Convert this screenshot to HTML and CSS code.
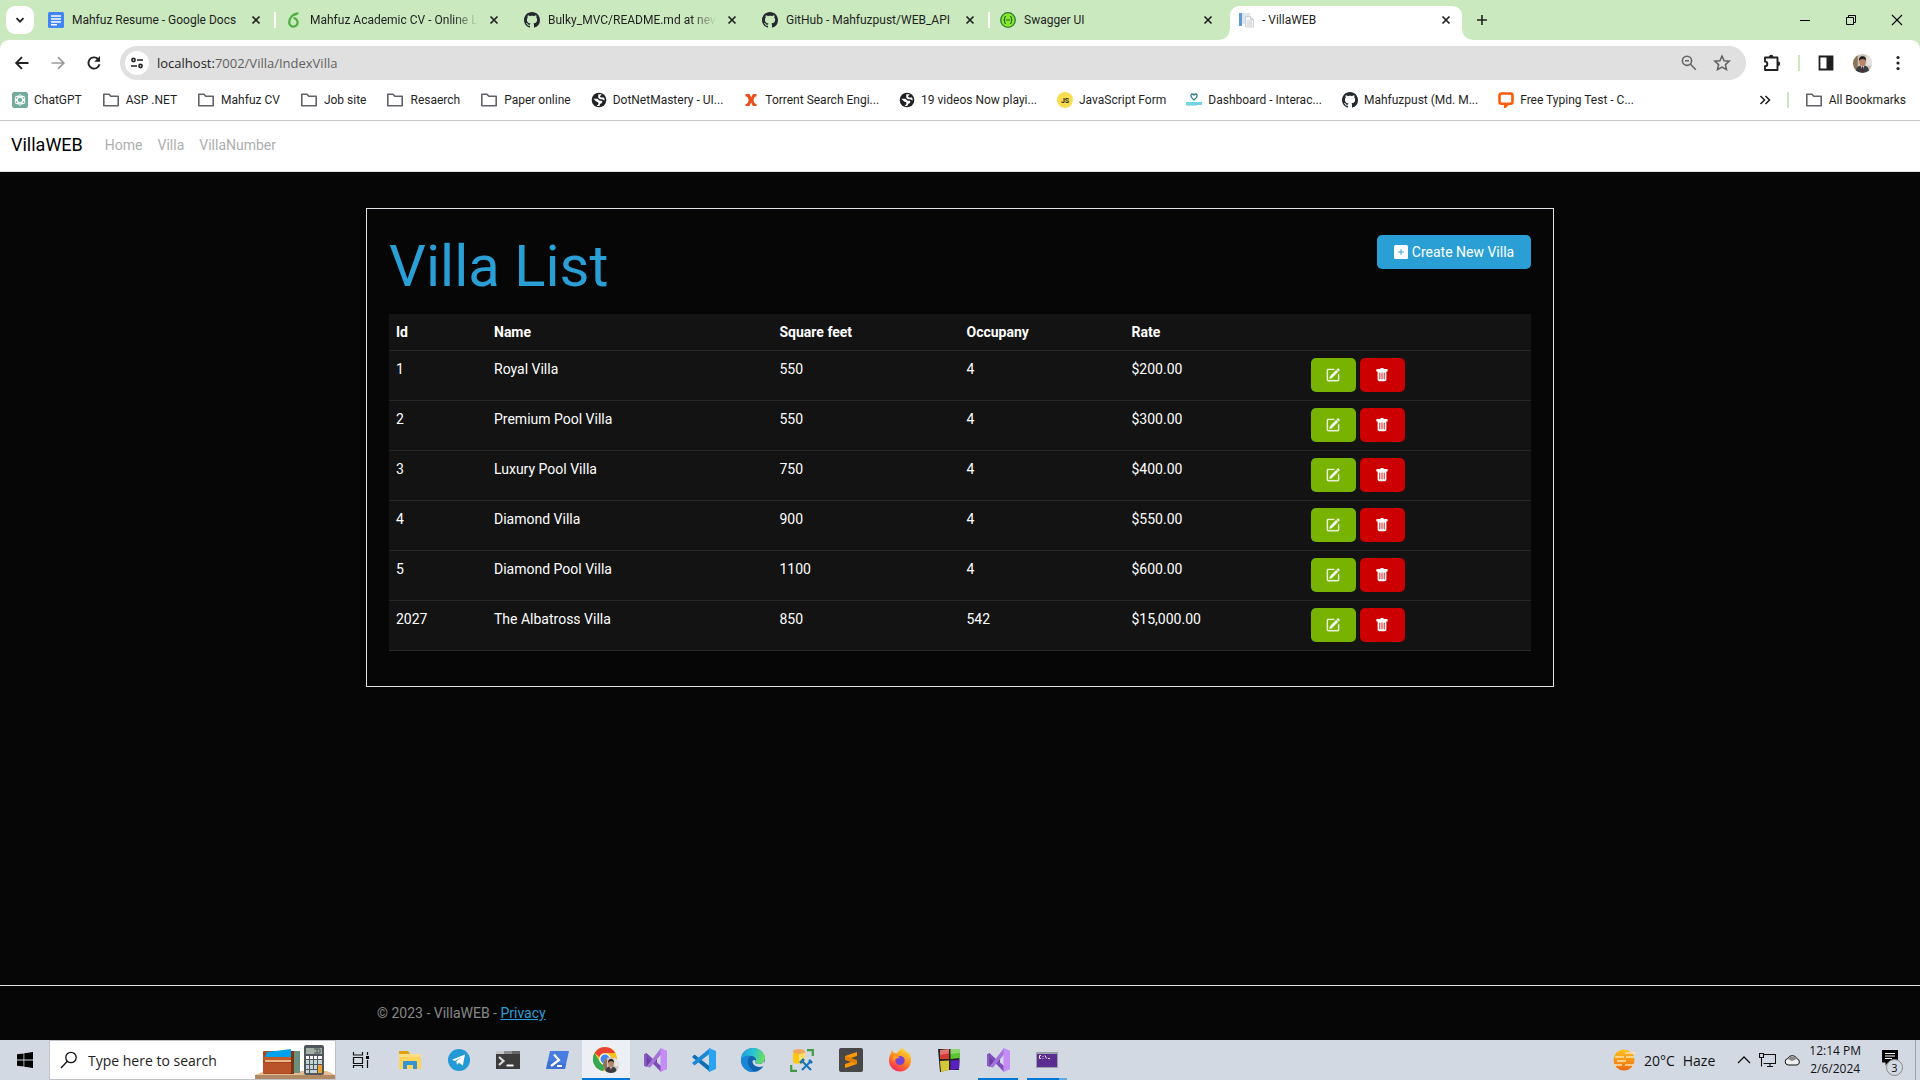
FILE: index.html
```html
<!DOCTYPE html>
<html lang="en">
<head>
<meta charset="utf-8">
<meta name="viewport" content="width=device-width, initial-scale=1">
<title>- VillaWEB</title>
<link rel="stylesheet" href="styles.css">
</head>
<body>
<svg class="defs" aria-hidden="true">
  <symbol id="i-close" viewBox="0 0 10 10"><path d="M1.5 1.5l7 7M8.5 1.5l-7 7" fill="none" stroke="#222" stroke-width="1.7"/></symbol>
  <symbol id="i-folder" viewBox="0 0 18 16"><path d="M1.8 2.2h5.2l1.8 2.1h7.4v9.5H1.8z" fill="none" stroke="#5f6368" stroke-width="1.6" stroke-linejoin="round"/></symbol>
  <symbol id="i-github" viewBox="0 0 16 16"><path fill="#24292f" d="M8 0C3.58 0 0 3.58 0 8c0 3.54 2.29 6.53 5.47 7.59.4.07.55-.17.55-.38 0-.19-.01-.82-.01-1.49-2.01.37-2.53-.49-2.69-.94-.09-.23-.48-.94-.82-1.13-.28-.15-.68-.52-.01-.53.63-.01 1.08.58 1.23.82.72 1.21 1.87.87 2.33.66.07-.52.28-.87.51-1.07-1.78-.2-3.64-.89-3.64-3.95 0-.87.31-1.59.82-2.15-.08-.2-.36-1.02.08-2.12 0 0 .67-.21 2.2.82.64-.18 1.32-.27 2-.27.68 0 1.36.09 2 .27 1.53-1.04 2.2-.82 2.2-.82.44 1.1.16 1.92.08 2.12.51.56.82 1.27.82 2.15 0 3.07-1.87 3.75-3.65 3.95.29.25.54.73.54 1.48 0 1.07-.01 1.93-.01 2.2 0 .21.15.46.55.38A8.012 8.012 0 0 0 16 8c0-4.42-3.58-8-8-8z"/></symbol>
  <symbol id="i-globe" viewBox="0 0 16 16"><circle cx="8" cy="8" r="7.3" fill="#202124"/><path d="M2.400 6.800h3.800c1.300 0 1.300 1.900 2.600 1.900h2.400v1.400c0 1.600-2 1.300-2.400 2.600l-.3 1.300c-1 .2-2.200-.1-3-.5 1.700-.3 2-1.300 1.900-2.400-.1-1.300-1.700-1-2.500-1.800zM7.300 2.300h3.400c-.2 1-1.200 1.200-1.600 1.800-.3.700.5 1.300 1.400 1.300H13c.5 1 .8 2 .6 3-1.200-.7-2.300-1.200-3.700-1.200-1.600 0-2.700-.9-2.700-2.500z" fill="#fff"/></symbol>
  <symbol id="i-edit" viewBox="0 0 16 16"><path fill="currentColor" stroke="currentColor" stroke-width=".4" d="M15.502 1.940a.5.5 0 0 1 0 .706L14.459 3.690l-2-2L13.502.646a.5.5 0 0 1 .707 0l1.293 1.293zm-1.750 2.456-2-2L4.939 9.210a.5.5 0 0 0-.121.196l-.805 2.414a.25.25 0 0 0 .316.316l2.414-.805a.5.5 0 0 0 .196-.12l6.813-6.814z"/><path fill="currentColor" stroke="currentColor" stroke-width=".4" d="M1 13.500A1.500 1.500 0 0 0 2.500 15h11a1.500 1.500 0 0 0 1.500-1.500v-6a.5.5 0 0 0-1 0v6a.5.5 0 0 1-.5.5h-11a.5.5 0 0 1-.5-.5v-11a.5.5 0 0 1 .5-.5H9a.5.5 0 0 0 0-1H2.500A1.500 1.500 0 0 0 1 2.500v11z"/></symbol>
  <symbol id="i-trash" viewBox="0 0 16 16"><path fill="currentColor" d="M2.500 1a1 1 0 0 0-1 1v1a1 1 0 0 0 1 1H3v9a2 2 0 0 0 2 2h6a2 2 0 0 0 2-2V4h.5a1 1 0 0 0 1-1V2a1 1 0 0 0-1-1H10a1 1 0 0 0-1-1H7a1 1 0 0 0-1 1H2.500zm3 4a.5.5 0 0 1 .5.5v7a.5.5 0 0 1-1 0v-7a.5.5 0 0 1 .5-.5zM8 5a.5.5 0 0 1 .5.5v7a.5.5 0 0 1-1 0v-7A.5.5 0 0 1 8 5zm3 .5v7a.5.5 0 0 1-1 0v-7a.5.5 0 0 1 1 0z"/></symbol>
  <symbol id="i-avatar" viewBox="0 0 20 20"><clipPath id="av"><circle cx="10" cy="10" r="10"/></clipPath><g clip-path="url(#av)"><path fill="#c9c3ba" d="M0 0h20v20H0z"/><path fill="#8b7358" d="M0 0h5v20H0z"/><path fill="#e6e4e0" d="M14 0h6v12h-6z"/><path fill="#3a3d42" d="M3 20c0-6 2-8 7-8s7 2 7 8z"/><path fill="#eee" d="M8 12l2 5 2-5z"/><path fill="#5d2431" d="M9.400 13h1.200l.5 6h-2z"/><ellipse cx="10" cy="8.500" rx="3.300" ry="4.200" fill="#b98566"/><path fill="#241c1a" d="M6.300 8c-.4-4 1.200-5.600 3.800-5.600S14 4 13.700 8c-.6-2-1.500-2.700-3.600-2.700S6.900 6 6.300 8z"/></g></symbol>
  <symbol id="i-vs" viewBox="0 0 24 24"><path fill="#6b3fa0" d="M1 6.500l2.500-1.300L14 15.500V8L3.500 18.800 1 17.500z"/><path fill="#8a5cc4" d="M1 6.500L3.500 5v14L1 17.500z"/><path fill="#7d4dbb" d="M3.500 5.200L18 18v6L3.500 9z"/><path fill="#a274dc" d="M3.500 18.800L18 0v6.500L7 19.500z"/><path fill="#c58cf5" d="M17.500 0L24 2.800v18.400L17.500 24z"/></symbol>
</svg>

<header class="browser">
  <div class="tabstrip">
    <button class="tab-search" aria-label="Search tabs"><svg width="12" height="12" viewBox="0 0 12 12"><path d="M2.500 4.200L6 7.700l3.500-3.500" fill="none" stroke="#222" stroke-width="1.800"/></svg></button>
    <div class="tabs">
      <div class="tab divided"><svg class="fav" viewBox="0 0 16 16"><rect width="16" height="16" rx="1.500" fill="#4285f4"/><path d="M3 4h10M3 7h10M3 10h10M3 12.800h6" stroke="#fff" stroke-width="1.500"/></svg><span class="tab-title">Mahfuz Resume - Google Docs</span><button class="tab-close" aria-label="Close tab"><svg><use href="#i-close"/></svg></button></div>
      <div class="tab"><svg class="fav" viewBox="0 0 16 16"><path d="M11 1.500C7 1.800 3.200 6 3.200 10.200a4.200 4.200 0 1 0 4.300-4" fill="none" stroke="#4caf3f" stroke-width="2.200"/><path d="M5 4.500C7 2 10 0 13 .8c-1 2.500-4 3.200-6 2.800z" fill="#4caf3f"/></svg><span class="tab-title faded">Mahfuz Academic CV - Online L</span><button class="tab-close" aria-label="Close tab"><svg><use href="#i-close"/></svg></button></div>
      <div class="tab"><svg class="fav"><use href="#i-github"/></svg><span class="tab-title faded">Bulky_MVC/README.md at new</span><button class="tab-close" aria-label="Close tab"><svg><use href="#i-close"/></svg></button></div>
      <div class="tab divided"><svg class="fav"><use href="#i-github"/></svg><span class="tab-title">GitHub - Mahfuzpust/WEB_API</span><button class="tab-close" aria-label="Close tab"><svg><use href="#i-close"/></svg></button></div>
      <div class="tab"><svg class="fav" viewBox="0 0 16 16"><circle cx="8" cy="8" r="7.300" fill="#85ea2d" stroke="#2c7a3a" stroke-width="1.300"/><path d="M6 4.500c-1.500 0-1.300 1-1.300 2S4.500 8 3.500 8c1 0 1.200.5 1.200 1.500s-.2 2 1.300 2M10 4.500c1.500 0 1.300 1 1.300 2s.2 1.500 1.200 1.500c-1 0-1.200.5-1.200 1.500s.2 2-1.300 2M6 8h4" fill="none" stroke="#27632f" stroke-width="1.100"/></svg><span class="tab-title">Swagger UI</span><button class="tab-close" aria-label="Close tab"><svg><use href="#i-close"/></svg></button></div>
      <div class="tab active"><svg class="fav" viewBox="0 0 16 16"><path fill="#5b9bd5" d="M1 1h3v13H1z"/><path fill="#dfe6ee" d="M4 1h8v11H4z"/><path d="M7.500 4.500h5l3 3V15h-8z" fill="#f4f4f4" stroke="#c3c8cf" stroke-width=".8"/><path d="M9 9h5M9 11h5M9 13h5M12.500 4.500v3h3" stroke="#c3c8cf" fill="none" stroke-width=".8"/></svg><span class="tab-title">- VillaWEB</span><button class="tab-close" aria-label="Close tab"><svg><use href="#i-close"/></svg></button></div>
    </div>
    <button class="new-tab" aria-label="New tab"><svg width="12" height="12" viewBox="0 0 12 12"><path d="M6 1v10M1 6h10" stroke="#222" stroke-width="1.600"/></svg></button>
    <div class="window-buttons">
      <button aria-label="Minimize"><svg width="12" height="12" viewBox="0 0 12 12"><path d="M1 6.500h10" stroke="#000"/></svg></button>
      <button aria-label="Restore"><svg width="12" height="12" viewBox="0 0 12 12"><path d="M1.500 3.500h7v7h-7zM3.500 3.500v-2h7v7h-2" fill="none" stroke="#000"/></svg></button>
      <button aria-label="Close"><svg width="12" height="12" viewBox="0 0 12 12"><path d="M1 1l10 10M11 1L1 11" stroke="#000" stroke-width="1.100"/></svg></button>
    </div>
  </div>

  <div class="toolbar">
    <button class="nav-button" aria-label="Back"><svg width="16" height="16" viewBox="0 0 16 16"><path d="M14.500 8H2.500M8 2.200L2.200 8 8 13.800" fill="none" stroke="#222" stroke-width="1.900"/></svg></button>
    <button class="nav-button" aria-label="Forward"><svg width="16" height="16" viewBox="0 0 16 16"><path d="M1.500 8h12M8 2.200L13.800 8 8 13.800" fill="none" stroke="#9a9a9a" stroke-width="1.700"/></svg></button>
    <button class="nav-button" aria-label="Reload"><svg width="16" height="16" viewBox="0 0 16 16"><path d="M13.500 9.300A5.600 5.600 0 1 1 12 4" fill="none" stroke="#222" stroke-width="1.900"/><path d="M14 1v5.800H8.200z" fill="#222"/></svg></button>
    <div class="address">
      <button class="site-info" aria-label="Site information"><svg width="14" height="14" viewBox="0 0 14 14"><g fill="none" stroke="#222" stroke-width="1.600"><circle cx="3.500" cy="4" r="1.600"/><path d="M7 4h6M1 10h6"/><circle cx="10.500" cy="10" r="1.600"/></g></svg></button>
      <p class="url"><span>localhost:</span>7002/Villa/IndexVilla</p>
      <button aria-label="Zoom"><svg width="16" height="16" viewBox="0 0 16 16"><g fill="none" stroke="#666" stroke-width="1.600"><circle cx="6" cy="5.800" r="4.600"/><path d="M9.500 9.300l5.300 5.500M4 5.800h4"/></g></svg></button>
      <button aria-label="Bookmark this tab"><svg width="18" height="18" viewBox="0 0 18 18"><path d="M9 2l2.100 4.700 5.100.5-3.800 3.400 1.100 5L9 13l-4.500 2.600 1.100-5L1.800 7.200l5.100-.5z" fill="none" stroke="#5f5f5f" stroke-width="1.500"/></svg></button>
    </div>
    <button class="tool" aria-label="Extensions"><svg width="18" height="18" viewBox="0 0 18 18"><path d="M2 3.500h12.500v12.500H2v-3.800a2.200 2.200 0 0 0 0-4.600z" fill="none" stroke="#222" stroke-width="1.900" stroke-linejoin="round"/><path fill="#222" d="M6 3a2.200 2.200 0 0 1 4.400 0zM15 7.600a2.200 2.200 0 0 1 0 4.400z"/></svg></button>
    <span class="green-rule"></span>
    <button class="tool" aria-label="Side panel"><svg width="16" height="16" viewBox="0 0 16 16"><path d="M1.500 1.500h13v13h-13z" fill="none" stroke="#1f1f1f" stroke-width="1.800"/><path fill="#1f1f1f" d="M8.500 1.500h6v13h-6z"/></svg></button>
    <button class="tool" aria-label="Profile"><svg width="19" height="19"><use href="#i-avatar"/></svg></button>
    <button class="tool" aria-label="Menu"><svg width="4" height="16" viewBox="0 0 4 16"><g fill="#222"><circle cx="2" cy="2.500" r="1.600"/><circle cx="2" cy="8" r="1.600"/><circle cx="2" cy="13.500" r="1.600"/></g></svg></button>
  </div>

  <nav class="bookmarks" aria-label="Bookmarks">
    <a href="#"><svg class="fav" viewBox="0 0 16 16"><rect width="16" height="16" rx="2.500" fill="#74aa9c"/><g fill="none" stroke="#fff" stroke-width=".9"><ellipse cx="8" cy="8" rx="2.600" ry="5.300"/><ellipse cx="8" cy="8" rx="2.600" ry="5.300" transform="rotate(60 8 8)"/><ellipse cx="8" cy="8" rx="2.600" ry="5.300" transform="rotate(120 8 8)"/></g></svg>ChatGPT</a>
    <a href="#"><svg class="folder"><use href="#i-folder"/></svg>ASP .NET</a>
    <a href="#"><svg class="folder"><use href="#i-folder"/></svg>Mahfuz CV</a>
    <a href="#"><svg class="folder"><use href="#i-folder"/></svg>Job site</a>
    <a href="#"><svg class="folder"><use href="#i-folder"/></svg>Resaerch</a>
    <a href="#"><svg class="folder"><use href="#i-folder"/></svg>Paper online</a>
    <a href="#"><svg class="fav"><use href="#i-globe"/></svg>DotNetMastery - UI...</a>
    <a href="#"><svg class="fav" viewBox="0 0 16 16"><path fill="#e8501e" d="M2.500 2h4l1.700 3.200L10 2h3.500v2.300c-1.800.2-2.800 1.700-2.900 3.700 0 2 1 4 3 4.300V14H9.800l-1.700-3.400L6.500 14h-4v-1.800C4.500 11.800 5.600 10 5.500 8S4.400 4.500 2.500 4.300z"/></svg>Torrent Search Engi...</a>
    <a href="#"><svg class="fav"><use href="#i-globe"/></svg>19 videos Now playi...</a>
    <a href="#"><svg class="fav" viewBox="0 0 16 16"><circle cx="8" cy="8" r="8" fill="#f9dc4f"/><text x="8" y="11" text-anchor="middle" class="js-mark">JS</text></svg>JavaScript Form</a>
    <a href="#"><svg class="fav" viewBox="0 0 16 16"><path d="M8 8C5 5.500 4.500 4.500 5 3c.7-1.500 2.300-1.200 3 0 .7-1.200 2.300-1.500 3 0 .5 1.500 0 2.500-3 5z" fill="none" stroke="#2a7f8c" stroke-width="1.300"/><path fill="#6fd6e6" d="M0 10h16v3H0z"/><path fill="#b5e4ea" d="M0 13h11v1H0z"/></svg>Dashboard - Interac...</a>
    <a href="#"><svg class="fav"><use href="#i-github"/></svg>Mahfuzpust (Md. M...</a>
    <a href="#"><svg class="fav" viewBox="0 0 16 16"><path d="M3.500 1.500h9a2 2 0 0 1 2 2v6.300a2 2 0 0 1-2 2H10L7.200 14.600v-2.800H3.500a2 2 0 0 1-2-2V3.500a2 2 0 0 1 2-2z" fill="none" stroke="#ff5a0a" stroke-width="2.600"/></svg>Free Typing Test - C...</a>
    <button class="more" aria-label="More bookmarks"><svg width="12" height="10" viewBox="0 0 12 10"><path d="M1.500 1l4 4-4 4M6.500 1l4 4-4 4" fill="none" stroke="#222" stroke-width="1.600"/></svg></button>
    <span class="green-rule"></span>
    <a href="#"><svg class="folder"><use href="#i-folder"/></svg>All Bookmarks</a>
  </nav>
</header>

<div class="site">
  <nav class="navbar" aria-label="Site">
    <a class="brand" href="#">VillaWEB</a>
    <a href="#">Home</a>
    <a href="#">Villa</a>
    <a href="#">VillaNumber</a>
  </nav>

  <main class="container card">
    <div class="card-head">
      <h1>Villa List</h1>
      <button class="btn primary"><svg width="14" height="14" viewBox="0 0 14 14"><rect width="14" height="14" rx="1.500" fill="#fff"/><path d="M7 4v6M4 7h6" stroke="#2a9fd6" stroke-width=".9"/></svg>Create New Villa</button>
    </div>
    <table>
      <colgroup><col class="c-id"><col class="c-name"><col class="c-area"><col class="c-occ"><col class="c-rate"><col></colgroup>
      <thead><tr><th>Id</th><th>Name</th><th>Square feet</th><th>Occupany</th><th>Rate</th><th></th></tr></thead>
      <tbody>
        <tr><td>1</td><td>Royal Villa</td><td>550</td><td>4</td><td>$200.00</td><td><div class="actions"><button class="btn success" aria-label="Edit"><svg><use href="#i-edit"/></svg></button><button class="btn danger" aria-label="Delete"><svg><use href="#i-trash"/></svg></button></div></td></tr>
        <tr><td>2</td><td>Premium Pool Villa</td><td>550</td><td>4</td><td>$300.00</td><td><div class="actions"><button class="btn success" aria-label="Edit"><svg><use href="#i-edit"/></svg></button><button class="btn danger" aria-label="Delete"><svg><use href="#i-trash"/></svg></button></div></td></tr>
        <tr><td>3</td><td>Luxury Pool Villa</td><td>750</td><td>4</td><td>$400.00</td><td><div class="actions"><button class="btn success" aria-label="Edit"><svg><use href="#i-edit"/></svg></button><button class="btn danger" aria-label="Delete"><svg><use href="#i-trash"/></svg></button></div></td></tr>
        <tr><td>4</td><td>Diamond Villa</td><td>900</td><td>4</td><td>$550.00</td><td><div class="actions"><button class="btn success" aria-label="Edit"><svg><use href="#i-edit"/></svg></button><button class="btn danger" aria-label="Delete"><svg><use href="#i-trash"/></svg></button></div></td></tr>
        <tr><td>5</td><td>Diamond Pool Villa</td><td>1100</td><td>4</td><td>$600.00</td><td><div class="actions"><button class="btn success" aria-label="Edit"><svg><use href="#i-edit"/></svg></button><button class="btn danger" aria-label="Delete"><svg><use href="#i-trash"/></svg></button></div></td></tr>
        <tr><td>2027</td><td>The Albatross Villa</td><td>850</td><td>542</td><td>$15,000.00</td><td><div class="actions"><button class="btn success" aria-label="Edit"><svg><use href="#i-edit"/></svg></button><button class="btn danger" aria-label="Delete"><svg><use href="#i-trash"/></svg></button></div></td></tr>
      </tbody>
    </table>
  </main>

  <footer class="site-footer"><p class="container">© 2023 - VillaWEB - <a href="#">Privacy</a></p></footer>
</div>

<div class="taskbar">
  <button class="start" aria-label="Start"><svg width="16" height="16" viewBox="0 0 16 16"><path d="M0 2.300L6.500 1.400v6.200H0zM7.300 1.200L16 0v7.600H7.300zM0 8.400h6.500v6.200L0 13.700zM7.300 8.400H16V16l-8.700-1.200z"/></svg></button>
  <div class="search">
    <svg width="18" height="18" viewBox="0 0 18 18"><g fill="none" stroke="#111" stroke-width="1.300"><circle cx="11" cy="6.500" r="5.200"/><path d="M7.300 10.300L1 17"/></g></svg>
    <input type="text" aria-label="Search" placeholder="Type here to search">
    <svg class="search-art" width="80" height="38" viewBox="0 0 80 38"><path fill="#e8bd94" d="M10 30h62l8 4H0z"/><path fill="#b08a64" d="M0 34h80v4H0z"/><rect x="38" y="10" width="7" height="22" fill="#6b8f7a"/><rect x="8" y="10" width="31" height="23" rx="1" fill="#a9491f"/><path fill="#7d3415" d="M35 10h4v23h-4z"/><path fill="#00a2ed" d="M10 16l2-5 24-3v8z"/><path fill="#c45a2a" d="M8 16h28v3H8z"/><path fill="#e8b888" d="M10 19h26v2H10z"/><path fill="#b9542a" d="M8 22h28v10H8z"/><rect x="49" y="4" width="20" height="30" rx="2" fill="#51565c"/><rect x="51" y="7" width="16" height="6" fill="#a3b0a5"/><path d="M59 8h6v4h-6M62 8v4" fill="none" stroke="#51565c"/><g fill="#fff"><path d="M51 15h3v3h-3zM55 15h3v3h-3zM59 15h3v3h-3zM63 15h4v3h-4z"/></g><g fill="#c3d4d8"><path d="M51 19h3v4h-3zM55 19h3v4h-3zM59 19h3v4h-3zM63 19h4v4h-4zM51 24h3v4h-3zM55 24h3v4h-3zM59 24h3v4h-3zM51 29h3v3h-3zM55 29h7v3h-7z"/></g><path fill="#f0a02c" d="M63 24h4v8h-4z"/></svg>
  </div>
  <div class="apps">
    <button aria-label="Task view"><svg width="18" height="16" viewBox="0 0 18 16"><path d="M1.500 0v3h9V0M1.500 5.500h9v6h-9zM1.500 16v-2.500h9V16M15.500 0v3M15.500 8v8" fill="none" stroke="#111" stroke-width="1.200"/><path d="M14 4h3v3h-3z"/></svg></button>
    <button aria-label="File Explorer"><svg width="24" height="24" viewBox="0 0 24 24"><path fill="#dfa00f" d="M1 3h9l2 3v4H1z"/><path fill="#ffd35c" d="M1 6h22v15H1z"/><path fill="#ffdf85" d="M1 6h22v3H1z"/><path fill="#3893d1" d="M5 21v-7q0-1 1-1h12q1 0 1 1v7h-4v-4H9v4z"/></svg></button>
    <button aria-label="Telegram"><svg width="24" height="24" viewBox="0 0 24 24"><circle cx="12" cy="12" r="11" fill="#239ad6"/><path fill="#fff" d="M5 11.800L18 6.600l-2.200 11-3.800-2.800-2 2-.7-3.600L15 9l-7.200 4z"/></svg></button>
    <button aria-label="Terminal"><svg width="24" height="24" viewBox="0 0 24 24"><path fill="#3b3b3b" d="M0 3h24v18H0z"/><path fill="#c5c5c5" d="M0 3h8v3H0z"/><path fill="#8d8d8d" d="M8 3h8v3H8z"/><path fill="#666" d="M16 3h8v3h-8z"/><path d="M3 9l4.500 4L3 17" fill="none" stroke="#ddd" stroke-width="2.200"/><path d="M10.500 17.500h7" stroke="#fff" stroke-width="2"/></svg></button>
    <button aria-label="PowerShell"><svg width="24" height="24" viewBox="0 0 24 24"><path fill="#477de0" d="M5 3h19l-4 18H1z"/><path fill="#2f62c7" d="M3 13l-2 8h19l1-5z" opacity=".45"/><path d="M9 6.500l5 5.500-8 6" fill="none" stroke="#fff" stroke-width="2.200"/><path d="M12 18h5" stroke="#fff" stroke-width="2"/></svg></button>
    <button class="current" aria-label="Chrome"><svg width="28" height="28" viewBox="0 0 28 28"><circle cx="13" cy="13" r="12" fill="#fbc116"/><path fill="#ea4335" d="M13 1a12 12 0 0 1 10.400 6H13a6 6 0 0 0-5.600 4L2.600 7A12 12 0 0 1 13 1z"/><path fill="#34a853" d="M2.600 7l5.200 9A6 6 0 0 0 14 19l-3 6A12 12 0 0 1 2.600 7z"/><circle cx="13" cy="13" r="5.800" fill="#fff"/><circle cx="13" cy="13" r="4.500" fill="#4285f4"/><svg x="11" y="11" width="16" height="16"><use href="#i-avatar"/></svg></svg></button>
    <button aria-label="Visual Studio"><svg width="24" height="24"><use href="#i-vs"/></svg></button>
    <button aria-label="Visual Studio Code"><svg width="24" height="24" viewBox="0 0 24 24"><path fill="#0f6fb5" d="M0 9l2.500-2.500L18 18.500V24z"/><path fill="#1a8ad6" d="M0 15l2.500 2.500L18 5.500V0z"/><path fill="#2aa4f2" d="M17 0l7 3v18l-7 3z"/></svg></button>
    <button aria-label="Edge"><svg width="24" height="24" viewBox="0 0 24 24"><defs><linearGradient id="eg" x1="0" y1=".3" x2="1" y2=".5"><stop offset="0" stop-color="#1f9de0"/><stop offset=".5" stop-color="#2bc3d2"/><stop offset="1" stop-color="#6fe05a"/></linearGradient></defs><circle cx="12" cy="12" r="12" fill="#0f63b0"/><path fill="url(#eg)" d="M0 12C0 4 6 0 12 0c7 0 12 5 12 10 0 4-3 6-6 6-3.500 0-4.500-1-3.500-2.500C16 11 14 8 10 8 5 8 1 10 0 12z"/><path fill="#1b86d6" d="M0 12c1-4 6-5 9.500-4C5 11 6 20 14 23.800 6 25 0 19 0 12z"/><path fill="#d3d9e3" d="M14.500 13.500c-1 1.500 0 2.500 3.500 2.500 2 0 4-.8 5.500-3l.5 4-2.500 1.500C16 20 11.500 17.500 11.500 13c1.500-2 3.500-1 3 .5z"/></svg></button>
    <button aria-label="SQL Server Management"><svg width="24" height="24" viewBox="0 0 24 24"><path fill="#ffc815" d="M3 3v11c0 2.500 12 2.500 12 0V3z"/><path fill="#ffe066" d="M9 5h6v9c0 1.500-3 2-6 2z"/><ellipse cx="9" cy="3.500" rx="6" ry="2.500" fill="#f2a65a"/><path d="M17 2.200h5.800V8M1.200 17v5.800H7" fill="none" stroke="#3f9b46" stroke-width="2.200"/><path d="M12 13l9 9M21 13l-9 9" stroke="#1673bd" stroke-width="2"/><path d="M10 15l4-4M19 12l3 3" stroke="#1673bd" stroke-width="2.600"/></svg></button>
    <button aria-label="Sublime Text"><svg width="24" height="24" viewBox="0 0 24 24"><rect width="24" height="24" rx="2" fill="#474747"/><path fill="#ff9800" d="M6 8l12-4v4L6 12zM6 16l12-4v4L6 20z"/><path fill="#e07f00" d="M6 8l12 4v4L6 12z"/></svg></button>
    <button aria-label="Firefox"><svg width="24" height="24" viewBox="0 0 24 24"><defs><linearGradient id="ff" x1=".8" y1="0" x2=".3" y2="1"><stop offset="0" stop-color="#ffe43c"/><stop offset=".5" stop-color="#ff8a1e"/><stop offset="1" stop-color="#f5245b"/></linearGradient></defs><path fill="url(#ff)" d="M1 12c0-3 1-5 2-7l1-3 2 3 3 .3C10 3 12 3 13 0c3 1 5 3 6 5l1-1c2 2 3 5 3 8a11 11 0 0 1-22 1z"/><circle cx="12" cy="12.500" r="4.600" fill="#7542d5"/><path fill="#ff9a24" d="M5 8c3-1 5 0 7 1.500-2 .2-3 1.500-5 1.500 0 3-1 3-2 0z"/></svg></button>
    <button aria-label="Color blocks"><svg width="24" height="24" viewBox="0 0 24 24"><path fill="#222" d="M1 1l11 0 11 0-1 21-11 0-8 2z"/><path fill="#d23a32" d="M3 2l9-1v10H3z"/><path fill="#5bc42e" d="M13.500 1H23v9l-9.500 1z"/><path fill="#d5c838" d="M3 13l9-.5V22l-8 2z"/><path fill="#5a1fc0" d="M13.500 12.500l9-.5-.5 9-8.500 1z"/><path fill="#fff" opacity=".3" d="M3 2l9-1v4L3 7zM13.500 1H23v4l-9.500 1z"/></svg></button>
    <button class="open" aria-label="Visual Studio, open"><svg width="24" height="24"><use href="#i-vs"/></svg></button>
    <button class="open stacked" aria-label="Command Prompt"><svg width="22" height="16" viewBox="0 0 22 16"><path fill="#9aa0a8" d="M0 0h22v16H0z"/><path fill="#5b2d90" d="M1 2h20v13H1z"/><path d="M5 3.500H3.500v3H5M7 4v.8M7 6v.8M9 3.500l1.500 3M12 6.500h2" fill="none" stroke="#fff" stroke-width=".9"/></svg></button>
  </div>
  <div class="tray">
    <button class="weather"><svg width="24" height="22" viewBox="0 0 24 22"><defs><linearGradient id="hz" x1="0" y1="0" x2="0" y2="1"><stop offset="0" stop-color="#ffc31c"/><stop offset="1" stop-color="#ec6a12"/></linearGradient></defs><circle cx="12" cy="11" r="10.500" fill="url(#hz)"/><path d="M13 4h11M3 8h9M14 8h8M5 12h9M2 16h8M13 16h9" stroke="#fbe3b4" stroke-width="1.400"/></svg><span>20°C</span><span>Haze</span></button>
    <button aria-label="Show hidden icons"><svg width="14" height="8" viewBox="0 0 14 8"><path d="M1 7l6-6 6 6" fill="none" stroke="#111" stroke-width="1.300"/></svg></button>
    <button aria-label="Network"><svg width="17" height="14" viewBox="0 0 17 14"><path d="M4.500 1.500h12v9h-12M8 13.500h6M11 10.500v3M2.500 5v8.500M.5.500h4v4h-4z" fill="none" stroke="#111" stroke-width="1.100"/></svg></button>
    <button aria-label="OneDrive"><svg width="17" height="12" viewBox="0 0 17 12"><path d="M4 11a3.300 3.300 0 0 1-.2-6.500A5 5 0 0 1 13 4.800 3.200 3.200 0 0 1 13 11z" fill="#eee" stroke="#111"/><path d="M3.800 5A5 5 0 0 1 12.500 5L8 7z" fill="#888"/></svg></button>
    <button class="clock"><time>12:14 PM</time><time>2/6/2024</time></button>
    <button class="notify" aria-label="Notifications"><svg width="16" height="16" viewBox="0 0 16 16"><path d="M0 0h16v12.500H6L3.500 15.500v-3H0z"/><path d="M3 3.500h10M3 6h10M3 8.500h7" stroke="#fff"/></svg><span class="count">3</span></button>
  </div>
</div>
</body>
</html>
```
FILE: styles.css
```css
* { box-sizing: border-box; }

body {
  margin: 0;
  min-height: 100vh;
  display: flex;
  flex-direction: column;
  background: #060606;
  font-family: "Open Sans", "Noto Sans", sans-serif;
  font-size: 12px;
  color: #1f1f1f;
}

button, input { font: inherit; color: inherit; }

button {
  display: flex;
  align-items: center;
  justify-content: center;
  padding: 0;
  border: 0;
  background: none;
}

a { color: inherit; text-decoration: none; }
p, h1 { margin: 0; }
svg { flex: none; }
.defs { position: absolute; width: 0; height: 0; }
.fav { width: 16px; height: 16px; }
.folder { width: 18px; height: 16px; }

/* Browser chrome */
.browser { background: #cae9be; }

.tabstrip {
  display: flex;
  height: 40px;
  padding: 6px 0 0 6px;
  font-family: Roboto, sans-serif;
}

.tab-search {
  width: 28px;
  height: 28px;
  margin-right: 6px;
  border-radius: 9px;
  background: #fff;
}

.tabs {
  display: flex;
  flex: 0 1 1422px;
  gap: 6px;
  min-width: 0;
}

.tab {
  position: relative;
  display: flex;
  flex: 1 1 0;
  align-items: center;
  gap: 8px;
  min-width: 0;
  height: 34px;
  padding: 0 8px 6px;
}

.tab.active {
  border-radius: 9px 9px 0 0;
  background: #fff;
}

.tab.active::before,
.tab.active::after {
  content: "";
  position: absolute;
  bottom: 0;
  width: 10px;
  height: 10px;
}

.tab.active::before { left: -10px; background: radial-gradient(circle at 0 0, transparent 9px, #fff 10px); }
.tab.active::after { right: -10px; background: radial-gradient(circle at 100% 0, transparent 9px, #fff 10px); }

.tab.divided::after {
  content: "";
  position: absolute;
  right: -4px;
  top: 6px;
  width: 2px;
  height: 16px;
  background: #fff;
}

.tab-title {
  flex: 1;
  min-width: 0;
  overflow: hidden;
  white-space: nowrap;
}

.faded { mask-image: linear-gradient(to right, #000 calc(100% - 24px), transparent); }
.tab-close { width: 16px; height: 16px; }
.tab-close svg { width: 10px; height: 10px; }
.new-tab { width: 28px; height: 28px; margin-left: 6px; }
.window-buttons { display: flex; margin-left: auto; }
.window-buttons button { width: 46px; height: 28px; }

.toolbar {
  display: flex;
  align-items: center;
  height: 46px;
  padding: 0 4px;
  border-radius: 9px 9px 0 0;
  background: #fff;
}

.nav-button { width: 36px; height: 34px; }

.address {
  display: flex;
  flex: 1;
  align-items: center;
  gap: 16px;
  height: 34px;
  margin-left: 8px;
  margin-right: 8px;
  padding: 0 15px 0 5px;
  border-radius: 17px;
  background: #e0e0e0;
}

.site-info { width: 24px; height: 24px; border-radius: 50%; background: #fff; }
.url { flex: 1; margin-left: -8px; font-size: 13px; color: #5f5f5f; }
.url span { color: #1f1f1f; }
.tool { width: 36px; height: 34px; }
.green-rule { width: 2px; height: 16px; background: #cae9be; }
.toolbar .green-rule { margin: 0 8px; }

.bookmarks {
  display: flex;
  align-items: center;
  gap: 20px;
  height: 35px;
  padding: 0 14px 7px 12px;
  border-bottom: 1px solid #c8c8c8;
  background: #fff;
  font-family: Roboto, sans-serif;
  white-space: nowrap;
}

.bookmarks a { display: flex; align-items: center; gap: 6px; }
.js-mark { font-size: 7px; font-weight: 700; fill: #222; }
.more { margin-left: auto; }
.bookmarks .green-rule { margin: 0 -4px; }

/* Site */
.site {
  display: flex;
  flex: 1;
  flex-direction: column;
  font-family: Roboto, sans-serif;
  font-size: 14px;
  line-height: 22px;
  color: #fff;
}

.navbar {
  display: flex;
  align-items: center;
  gap: 15px;
  height: 51px;
  padding: 0 11px 2px;
  border-bottom: 1px solid #dee2e6;
  background: #fff;
  color: #adafae;
}

.brand { margin-right: 7px; font-size: 18px; color: #000; }

.container { width: min(1188px, 100%); margin: 0 auto; }

.card {
  margin-top: 36px;
  padding: 26px 22px 35px;
  border: 1px solid #dee2e6;
}

.card-head {
  display: flex;
  align-items: flex-start;
  justify-content: space-between;
  padding-bottom: 16px;
}

h1 {
  font-size: 58px;
  font-weight: 400;
  line-height: 63px;
  color: #2a9fd6;
}

.btn {
  gap: 4px;
  min-width: 45px;
  height: 34px;
  padding: 0 15px 1px;
  border-radius: 5px;
  color: #fff;
}

.btn svg { width: 14px; height: 14px; }
.primary { min-width: 154px; background: #2a9fd6; }
.success { background: #77b300; }
.danger { background: #c00; }

table {
  width: 100%;
  table-layout: fixed;
  border-collapse: collapse;
  background: #131313;
}

.c-id { width: 98px; }
.c-name { width: 25%; }
.c-area { width: 187px; }
.c-occ { width: 165px; }
.c-rate { width: 179px; }

th, td {
  padding: 7px;
  border-bottom: 1px solid #282828;
  text-align: left;
  vertical-align: top;
}

th { font-weight: 700; }
td { height: 50px; }
.actions { display: flex; gap: 4px; }

.site-footer {
  margin-top: auto;
  padding: 16px 0;
  border-top: 1px solid #dee2e6;
  color: #888;
}

.site-footer .container { padding: 0 11px; }
.site-footer a { color: #2a9fd6; text-decoration: underline; }

/* Taskbar */
.taskbar {
  display: flex;
  height: 40px;
  background: #d3d9e3;
  font-size: 14px;
  color: #111;
}

.start { width: 49px; }

.search {
  display: flex;
  flex: 0 1 287px;
  align-items: center;
  gap: 10px;
  min-width: 0;
  padding-left: 10px;
  border: 1px solid #bfc3c9;
  background: #fff;
}

.search input {
  flex: 1;
  width: 0;
  min-width: 0;
  padding: 0;
  border: 0;
  outline: 0;
  background: none;
}

.search input::placeholder { color: #222; opacity: 1; }
.apps { display: flex; gap: 1px; padding-left: 1px; }
.apps button { width: 48px; border-bottom: 2px solid transparent; padding-top: 1px; }
.apps .current { border-color: #0078d7; background: #eceff4; }
.open { background: linear-gradient(#0078d7, #0078d7) center bottom / 40px 2px no-repeat border-box; }
.apps .stacked { background: linear-gradient(to right, #0078d7 32px, #62a8e2 32px) center bottom / 40px 2px no-repeat border-box; }

.tray { display: flex; margin-left: auto; gap: 8px; }
.weather { gap: 8px; margin-right: 14px; }
.clock { flex-direction: column; font-size: 12px; line-height: 18px; }

.notify {
  position: relative;
  width: 51px;
  padding: 0 10px 4px 0;
  background: linear-gradient(#9aa2ad, #9aa2ad) 46px 0 / 1px 100% no-repeat;
}

.count {
  position: absolute;
  left: 17px;
  top: 19px;
  width: 17px;
  height: 17px;
  border: 1px solid #888;
  border-radius: 50%;
  background: #d3d9e3;
  font-size: 11px;
  line-height: 15px;
}
```
